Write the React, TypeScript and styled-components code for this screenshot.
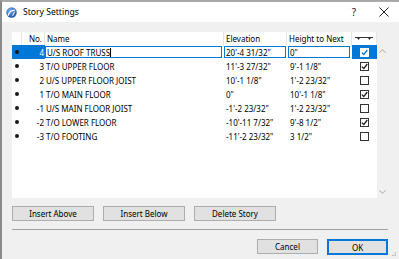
import styled, { createGlobalStyle } from "styled-components";

const GlobalStyle = createGlobalStyle`
  html, body {
    margin: 0;
    padding: 0;
    overflow: hidden;
    background: #f0f0f0;
  }
  body {
    font-family: "Noto Sans", "Open Sans", sans-serif;
    color: #000;
  }
`;

const COLUMNS = "10px 23px 179px 63px 65px 25px";
const BLUE = "#0078d7";

const StyledWindow = styled.div`
  position: relative;
  width: 399px;
  height: 259px;
  box-sizing: border-box;
  border-left: 2px solid #8a8a8a;
  border-top: 2px solid #a8a8a8;
  background: #f0f0f0;
  display: flex;
  flex-direction: column;
`;

const StyledTitleBar = styled.div`
  height: 20px;
  background: #fff;
  display: flex;
  align-items: center;
  padding-left: 4px;
`;

const StyledTitle = styled.div`
  margin-left: 6px;
  font-size: 8.6px;
  color: #000;
`;

const StyledCaptionButton = styled.div`
  width: 30px;
  height: 20px;
  display: flex;
  align-items: center;
  justify-content: center;
  font-size: 10px;
  color: #222;
`;

const StyledHelp = styled(StyledCaptionButton)`
  margin-left: auto;
`;

const StyledBody = styled.div`
  flex-grow: 1;
  padding: 10px 11px 0 10px;
  display: flex;
  flex-direction: column;
`;

const StyledListArea = styled.div`
  display: flex;
  height: 166px;
`;

const StyledTable = styled.div`
  width: 365px;
  background: #fff;
  display: flex;
  flex-direction: column;
`;

const StyledHeader = styled.div`
  display: grid;
  grid-template-columns: ${COLUMNS};
  height: 13px;
  font-size: 8px;
`;

const StyledHeadCell = styled.div<{ $align?: string }>`
  border-right: 1px solid #e5e5e5;
  padding: 0 2px;
  display: flex;
  align-items: center;
  justify-content: ${(p) => p.$align || "flex-start"};
  white-space: nowrap;
  overflow: hidden;
`;

const StyledRow = styled.div`
  display: grid;
  grid-template-columns: ${COLUMNS};
  height: 14px;
  font-size: 8px;
`;

const StyledCell = styled.div<{ $selected?: boolean; $align?: string; $pad?: string }>`
  display: flex;
  align-items: center;
  justify-content: ${(p) => p.$align || "flex-start"};
  padding: ${(p) => p.$pad || "0"};
  background: ${(p) => (p.$selected ? BLUE : "transparent")};
  color: ${(p) => (p.$selected ? "#fff" : "#000")};
  white-space: nowrap;
  overflow: hidden;
`;

const StyledDot = styled.span`
  width: 4px;
  height: 4px;
  border-radius: 50%;
  background: #1a1a1a;
`;

const StyledEditBox = styled.div<{ $mr?: number }>`
  flex-grow: 1;
  height: 12px;
  margin: 0 ${(p) => p.$mr ?? 2}px 0 0;
  border: 1px solid ${BLUE};
  box-sizing: border-box;
  background: #fff;
  color: #000;
  display: flex;
  align-items: center;
  padding-left: 1px;
`;

const StyledCaret = styled.span`
  display: inline-block;
  width: 1px;
  height: 9px;
  background: #000;
`;

const StyledCheck = styled.div<{ $onBlue?: boolean }>`
  width: 9px;
  height: 9px;
  box-sizing: border-box;
  border: 1px solid ${(p) => (p.$onBlue ? "#fff" : "#333")};
  background: #fff;
  display: flex;
  align-items: center;
  justify-content: center;
`;

const StyledScrollbar = styled.div`
  width: 11px;
  padding-top: 13px;
  display: flex;
  flex-direction: column;
  justify-content: space-between;
  align-items: center;
`;

const StyledArrow = styled.div`
  height: 12px;
  display: flex;
  align-items: center;
`;

const StyledActions = styled.div`
  display: flex;
  gap: 9px;
  margin-top: 8px;
`;

const StyledButton = styled.div<{ $width: number; $default?: boolean }>`
  width: ${(p) => p.$width}px;
  height: ${(p) => (p.$default ? 16 : 15)}px;
  box-sizing: border-box;
  background: #e1e1e1;
  border: ${(p) => (p.$default ? `2px solid ${BLUE}` : "1px solid #adadad")};
  display: flex;
  align-items: center;
  justify-content: center;
  font-size: 8px;
`;

const StyledSeparator = styled.div`
  height: 1px;
  background: #a0a0a0;
  margin-top: 8px;
`;

const StyledDialogButtons = styled.div`
  display: flex;
  justify-content: flex-end;
  gap: 9px;
  margin-top: 9px;
`;

const StyledGrip = styled.div`
  position: absolute;
  right: 2px;
  bottom: 2px;
  display: flex;
`;

type Story = {
  no: string;
  name: string;
  elevation: string;
  height: string;
  checked: boolean;
};

const stories: Story[] = [
  { no: "4", name: "U/S ROOF TRUSS", elevation: "20'-4 31/32\"", height: "0\"", checked: true },
  { no: "3", name: "T/O UPPER FLOOR", elevation: "11'-3 27/32\"", height: "9'-1 1/8\"", checked: true },
  { no: "2", name: "U/S UPPER FLOOR JOIST", elevation: "10'-1 1/8\"", height: "1'-2 23/32\"", checked: false },
  { no: "1", name: "T/O MAIN FLOOR", elevation: "0\"", height: "10'-1 1/8\"", checked: true },
  { no: "-1", name: "U/S MAIN FLOOR JOIST", elevation: "-1'-2 23/32\"", height: "1'-2 23/32\"", checked: false },
  { no: "-2", name: "T/O LOWER FLOOR", elevation: "-10'-11 7/32\"", height: "9'-8 1/2\"", checked: true },
  { no: "-3", name: "T/O FOOTING", elevation: "-11'-2 23/32\"", height: "3 1/2\"", checked: false },
];

function AppIcon() {
  return (
    <svg width="11" height="11" viewBox="0 0 11 11">
      <defs>
        <radialGradient id="ai" cx="0.35" cy="0.3" r="0.8">
          <stop offset="0" stopColor="#6fa8ee" />
          <stop offset="1" stopColor="#1b4f9e" />
        </radialGradient>
      </defs>
      <circle cx="5.5" cy="5.5" r="5.2" fill="url(#ai)" />
      <path d="M2.2 8.6 C3 4.6 6 2.8 8.8 3.4" stroke="#fff" strokeWidth="1.3" fill="none" />
      <path d="M6.6 8.8 L8.6 4.6" stroke="#fff" strokeWidth="1" fill="none" />
    </svg>
  );
}

function CheckMark({ color }: { color: string }) {
  return (
    <svg width="7" height="7" viewBox="0 0 7 7">
      <path d="M0.8 3.6 L2.8 5.5 L6.3 1" stroke={color} strokeWidth="1.3" fill="none" />
    </svg>
  );
}

function LevelIcon() {
  return (
    <svg width="18" height="5" viewBox="0 0 18 5">
      <rect x="0" y="1" width="18" height="1" fill="#333" />
      <path d="M2 2 L5 2 L3.5 4 Z M13 2 L16 2 L14.5 4 Z" fill="#333" />
    </svg>
  );
}

function Chevron({ up }: { up?: boolean }) {
  return (
    <svg width="7" height="4" viewBox="0 0 7 4">
      <path d={up ? "M0.5 3.5 L3.5 0.8 L6.5 3.5" : "M0.5 0.5 L3.5 3.2 L6.5 0.5"} stroke="#a6a6a6" strokeWidth="1" fill="none" />
    </svg>
  );
}

function StoryRow({ story, selected }: { story: Story; selected: boolean }) {
  return (
    <StyledRow>
      <StyledCell $selected={selected} $align="center">
        <StyledDot />
      </StyledCell>
      <StyledCell $selected={selected} $align="flex-end" $pad="0 1px 0 0">
        {story.no}
      </StyledCell>
      {selected ? (
        <>
          <StyledCell>
            <StyledEditBox>
              {story.name}
              <StyledCaret />
            </StyledEditBox>
          </StyledCell>
          <StyledCell>
            <StyledEditBox $mr={1}>{story.elevation}</StyledEditBox>
          </StyledCell>
          <StyledCell $pad="0 0 0 1px">
            <StyledEditBox $mr={2}>{story.height}</StyledEditBox>
          </StyledCell>
        </>
      ) : (
        <>
          <StyledCell $pad="0 0 0 1px">{story.name}</StyledCell>
          <StyledCell $pad="0 0 0 2px">{story.elevation}</StyledCell>
          <StyledCell $pad="0 0 0 3px">{story.height}</StyledCell>
        </>
      )}
      <StyledCell $selected={selected} $align="center">
        <StyledCheck $onBlue={selected}>
          {story.checked && <CheckMark color={selected ? BLUE : "#222"} />}
        </StyledCheck>
      </StyledCell>
    </StyledRow>
  );
}

export default function App() {
  return (
    <>
      <GlobalStyle />
      <StyledWindow>
        <StyledTitleBar>
          <AppIcon />
          <StyledTitle>Story Settings</StyledTitle>
          <StyledHelp>?</StyledHelp>
          <StyledCaptionButton>
            <svg width="10" height="10" viewBox="0 0 10 10">
              <path d="M0.5 0.5 L9.5 9.5 M9.5 0.5 L0.5 9.5" stroke="#222" strokeWidth="1" />
            </svg>
          </StyledCaptionButton>
        </StyledTitleBar>
        <StyledBody>
          <StyledListArea>
            <StyledTable>
              <StyledHeader>
                <StyledHeadCell />
                <StyledHeadCell $align="flex-end">No.</StyledHeadCell>
                <StyledHeadCell>Name</StyledHeadCell>
                <StyledHeadCell>Elevation</StyledHeadCell>
                <StyledHeadCell>Height to Next</StyledHeadCell>
                <StyledHeadCell $align="center">
                  <LevelIcon />
                </StyledHeadCell>
              </StyledHeader>
              {stories.map((s, i) => (
                <StoryRow key={s.no} story={s} selected={i === 0} />
              ))}
            </StyledTable>
            <StyledScrollbar>
              <StyledArrow>
                <Chevron up />
              </StyledArrow>
              <StyledArrow>
                <Chevron />
              </StyledArrow>
            </StyledScrollbar>
          </StyledListArea>
          <StyledActions>
            <StyledButton $width={82}>Insert Above</StyledButton>
            <StyledButton $width={82}>Insert Below</StyledButton>
            <StyledButton $width={82}>Delete Story</StyledButton>
          </StyledActions>
          <StyledSeparator />
          <StyledDialogButtons>
            <StyledButton $width={61}>Cancel</StyledButton>
            <StyledButton $width={61} $default>
              OK
            </StyledButton>
          </StyledDialogButtons>
        </StyledBody>
        <StyledGrip>
          <svg width="5" height="5" viewBox="0 0 5 5">
            <rect x="3" y="0" width="1" height="1" fill="#bbb" />
            <rect x="1.5" y="1.5" width="1" height="1" fill="#bbb" />
            <rect x="3" y="1.5" width="1" height="1" fill="#bbb" />
            <rect x="0" y="3" width="1" height="1" fill="#bbb" />
            <rect x="1.5" y="3" width="1" height="1" fill="#bbb" />
            <rect x="3" y="3" width="1" height="1" fill="#bbb" />
          </svg>
        </StyledGrip>
      </StyledWindow>
    </>
  );
}
